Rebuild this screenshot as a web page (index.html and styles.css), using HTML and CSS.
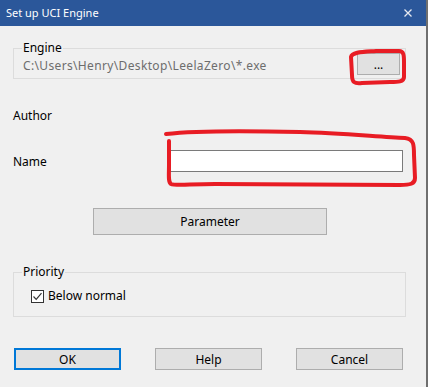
FILE: index.html
```html
<!DOCTYPE html>
<html lang="en">
<head>
    <meta charset="UTF-8">
    <title>Set up UCI Engine</title>
    <link rel="stylesheet" href="styles.css">
</head>
<body>
<div id="dialog">
    <div class="titlebar">
        <span class="title">Set up UCI Engine</span>
        <svg class="close" width="8" height="8" viewBox="0 0 8 8">
            <path d="M0.5 0.5L7.5 7.5M7.5 0.5L0.5 7.5" stroke="#e6e9f0" stroke-width="1.3"/>
        </svg>
    </div>
    <div class="content">
        <fieldset class="group">
            <legend>Engine</legend>
            <div class="engine-row">
                <span class="path">C:\Users\Henry\Desktop\LeelaZero\*.exe</span>
                <button class="btn browse">...</button>
            </div>
        </fieldset>
        <div class="form">
            <span class="label">Author</span>
            <span></span>
            <span class="label">Name</span>
            <input class="name-input" type="text">
        </div>
        <div class="param-row">
            <button class="btn param">Parameter</button>
        </div>
        <fieldset class="group priority">
            <legend>Priority</legend>
            <div class="priority-row">
                <label class="check">
                    <span class="box">
                        <svg width="11" height="11" viewBox="0 0 11 11">
                            <path d="M1.5 5.5L4.2 8.3L9.5 2.2" fill="none" stroke="#333" stroke-width="1.2"/>
                        </svg>
                    </span>
                    Below normal
                </label>
            </div>
        </fieldset>
        <div class="actions">
            <button class="btn default">OK</button>
            <button class="btn">Help</button>
            <button class="btn">Cancel</button>
        </div>
    </div>
    <!-- red marker scribbles on top of the screenshot -->
    <svg class="marks" width="428" height="387" viewBox="0 0 428 387">
        <path d="M351 57 C 352 52, 362 52, 376 51 L 399 51 C 404 51, 404 56, 404 62 L 404 77 C 404 82, 398 82, 390 82 L 362 83 C 354 84, 352 82, 352 75 L 351 57"
              fill="none" stroke="#e81c24" stroke-width="4" stroke-linecap="round" stroke-linejoin="round"/>
        <path d="M166 134 C 200 130, 260 131, 300 132 S 380 137, 405 138 C 414 139, 414 145, 414 155 L 415 178 C 415 184, 410 185, 400 185 L 215 184 C 190 184, 175 186, 171 184 C 168 182, 169 175, 169 165 L 169 141"
              fill="none" stroke="#e81c24" stroke-width="4" stroke-linecap="round" stroke-linejoin="round"/>
    </svg>
</div>
</body>
</html>
```
FILE: styles.css
```css
*{
    margin: 0;
    padding: 0;
    box-sizing: border-box;
}
body{
    background: #f0f0f0;
    font-family: "Segoe UI", "Noto Sans", sans-serif;
    font-size: 12px;
    color: #000;
}
#dialog{
    position: relative;
    width: 428px;
    height: 387px;
    background: #f0f0f0;
    border-right: 2px solid #6f6f6f;
}
.titlebar{
    height: 26px;
    background: #2b579a;
    color: #fff;
    display: flex;
    align-items: center;
    justify-content: space-between;
    padding: 0 14px 0 6px;
}
.title{
    font-size: 11px;
    line-height: 16px;
}
.close{
    display: block;
}
.content{
    padding: 14px 20px 0 13px;
}
.group{
    border: 1px solid #dcdcdc;
    padding: 0;
}
.group legend{
    margin-left: 8px;
    padding: 0 1px;
    line-height: 16px;
}
.engine-row{
    height: 22px;
    display: flex;
    align-items: center;
    justify-content: space-between;
    padding: 0 5px 2px 9px;
}
.path{
    color: #6d6d6d;
    line-height: 16px;
    letter-spacing: 0.35px;
}
.btn{
    font-family: inherit;
    font-size: 12px;
    color: #000;
    background: #e1e1e1;
    border: 1px solid #adadad;
    height: 22px;
}
.browse{
    width: 43px;
    align-self: flex-start;
    margin-top: -3px;
}
.form{
    display: grid;
    grid-template-columns: 157px 233px;
    grid-template-rows: 22px 22px;
    row-gap: 24px;
    align-items: center;
    margin-top: 25px;
}
.name-input{
    height: 22px;
    border: 1px solid #7a7a7a;
    background: #fff;
}
.param-row{
    display: flex;
    justify-content: center;
    margin-top: 36px;
}
.param{
    width: 234px;
    height: 27px;
    margin-left: 1px;
}
.priority{
    margin-top: 29px;
}
.priority-row{
    height: 36px;
    padding: 8px 0 0 17px;
}
.check{
    display: flex;
    align-items: center;
    gap: 4px;
    line-height: 16px;
}
.box{
    width: 13px;
    height: 13px;
    border: 1px solid #333;
    background: #fff;
    display: flex;
    align-items: center;
    justify-content: center;
}
.box svg{
    display: block;
}
.actions{
    display: flex;
    gap: 34px;
    margin-top: 31px;
    margin-left: 1px;
}
.actions .btn{
    width: 107px;
}
.actions .default{
    border: 2px solid #0078d7;
}
.marks{
    position: absolute;
    left: 0;
    top: 0;
    pointer-events: none;
}
```
